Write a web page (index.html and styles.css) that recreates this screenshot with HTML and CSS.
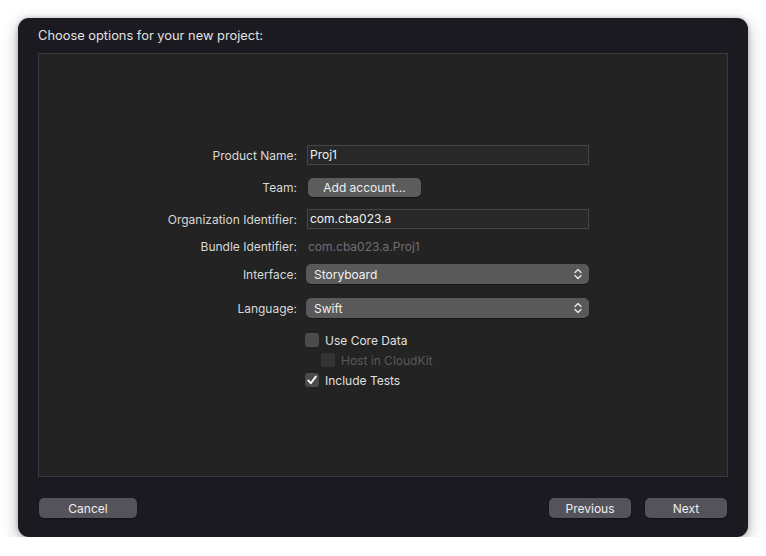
FILE: index.html
```html
<!DOCTYPE html>
<html>
<head>
<meta charset="utf-8">
<link rel="stylesheet" href="styles.css">
</head>
<body>
<div class="window">
  <div class="title">Choose options for your new project:</div>
  <div class="panel">
    <div class="form">
      <div class="row r-pn">
        <div class="label">Product Name:</div>
        <div class="field">Proj1</div>
      </div>
      <div class="row r-team">
        <div class="label">Team:</div>
        <div><span class="btn small">Add account...</span></div>
      </div>
      <div class="row r-org">
        <div class="label">Organization Identifier:</div>
        <div class="field">com.cba023.a</div>
      </div>
      <div class="row r-bundle">
        <div class="label">Bundle Identifier:</div>
        <div class="value-dim">com.cba023.a.Proj1</div>
      </div>
      <div class="row r-iface">
        <div class="label">Interface:</div>
        <div class="popup"><span>Storyboard</span>
          <svg class="updown" width="8" height="12" viewBox="0 0 8 12"><path d="M1 4.5 L4 1.5 L7 4.5 M1 7.5 L4 10.5 L7 7.5" fill="none" stroke="#e8e8e8" stroke-width="1.4" stroke-linecap="round" stroke-linejoin="round"/></svg>
        </div>
      </div>
      <div class="row r-lang">
        <div class="label">Language:</div>
        <div class="popup"><span>Swift</span>
          <svg class="updown" width="8" height="12" viewBox="0 0 8 12"><path d="M1 4.5 L4 1.5 L7 4.5 M1 7.5 L4 10.5 L7 7.5" fill="none" stroke="#e8e8e8" stroke-width="1.4" stroke-linecap="round" stroke-linejoin="round"/></svg>
        </div>
      </div>
      <div class="row r-cb1">
        <div></div>
        <div class="check"><span class="box"></span><span>Use Core Data</span></div>
      </div>
      <div class="row r-cb">
        <div></div>
        <div class="check indent disabled"><span class="box"></span><span>Host in CloudKit</span></div>
      </div>
      <div class="row r-cb">
        <div></div>
        <div class="check"><span class="box on"><svg width="14" height="14" viewBox="0 0 14 14"><path d="M3.2 7.4 L5.8 10.2 L10.8 3.6" fill="none" stroke="#ffffff" stroke-width="1.9" stroke-linecap="round" stroke-linejoin="round"/></svg></span><span>Include Tests</span></div>
      </div>
    </div>
  </div>
  <div class="footer">
    <span class="btn foot cancel">Cancel</span>
    <div class="right">
      <span class="btn foot prev">Previous</span>
      <span class="btn foot next">Next</span>
    </div>
  </div>
</div>
</body>
</html>
```

FILE: styles.css
```css
html, body {
  margin: 0;
  padding: 0;
  background: #ffffff;
}
body {
  font-family: "Inter", "Liberation Sans", sans-serif;
  font-size: 12px;
  color: #dedede;
}
.window {
  margin: 18px 0 0 18px;
  width: 730px;
  height: 519px;
  box-sizing: border-box;
  padding: 0 20px;
  background: #1c1a21;
  border-radius: 11px;
  box-shadow: 0 5px 16px rgba(0,0,0,0.3), 0 0 4px rgba(0,0,0,0.22);
  display: flex;
  flex-direction: column;
}
.title {
  padding-top: 10px;
  line-height: 16px;
  height: 16px;
  margin-bottom: 9px;
  font-size: 12.85px;
  color: #e2e2e2;
}
.panel {
  height: 424px;
  box-sizing: border-box;
  background: #232323;
  border: 1px solid #3a3a3c;
  padding-top: 91px;
}
.form {
  display: flex;
  flex-direction: column;
}
.row {
  display: grid;
  grid-template-columns: 258px 283px;
  column-gap: 9px;
  align-items: center;
  height: 20px;
}
.r-team, .r-org { margin-top: 12px; }
.r-bundle { margin-top: 7px; }
.r-iface { margin-top: 8px; }
.r-lang { margin-top: 14px; }
.r-cb1 { margin-top: 12px; }
.label {
  text-align: right;
  color: #d8d8d8;
}
.field {
  height: 20px;
  box-sizing: border-box;
  border: 1px solid #454545;
  background: #282828;
  padding: 0 2px;
  line-height: 18px;
  color: #f2f2f2;
  margin-left: 1px;
}
.value-dim {
  color: #6f6f6f;
  padding-left: 2px;
}
.btn {
  display: inline-flex;
  align-items: center;
  justify-content: center;
  box-sizing: border-box;
  border-radius: 5px;
  color: #eeeeee;
}
.small {
  height: 19px;
  width: 113px;
  margin-left: 2px;
  background: #5c5c5c;
  box-shadow: 0 0.5px 1px rgba(0,0,0,0.4);
}
.popup {
  height: 20px;
  box-sizing: border-box;
  border-radius: 5px;
  background: #595959;
  display: flex;
  align-items: center;
  justify-content: space-between;
  padding: 0 7px 0 8px;
  color: #f0f0f0;
  box-shadow: 0 0.5px 1px rgba(0,0,0,0.4);
}
.updown { display: block; }
.check {
  display: flex;
  align-items: center;
  gap: 6px;
  color: #e0e0e0;
  margin-left: -1px;
}
.check.indent { margin-left: 15px; }
.box {
  width: 14px;
  height: 14px;
  border-radius: 3px;
  background: #4a4a4a;
  display: block;
  box-sizing: border-box;
}
.box svg { display: block; }
.disabled { color: #5a5a5a; }
.disabled .box { background: #353535; }
.footer {
  display: flex;
  justify-content: space-between;
  margin-top: 21px;
  padding: 0 1px;
}
.foot {
  height: 20px;
  background: #54525a;
  box-shadow: 0 0.5px 1px rgba(0,0,0,0.4);
}
.cancel { width: 98px; }
.right { display: flex; gap: 14px; }
.prev { width: 82px; }
.next { width: 82px; }
```
